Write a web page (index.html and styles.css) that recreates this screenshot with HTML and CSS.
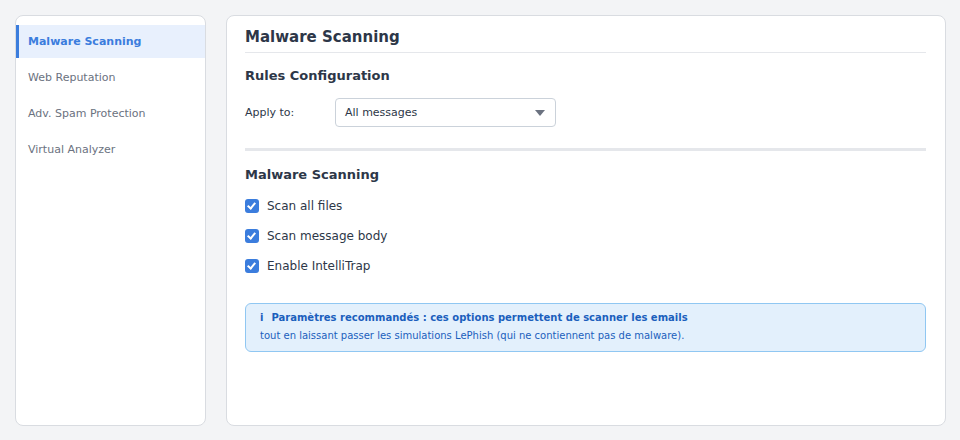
FILE: index.html
```html
<!DOCTYPE html>
<html lang="en">
<head>
  <meta charset="UTF-8">
  <title>Malware Scanning</title>
  <link rel="stylesheet" href="styles.css">
</head>
<body>
  <div class="layout">
    <nav class="sidebar">
      <a class="nav-item active">Malware Scanning</a>
      <a class="nav-item">Web Reputation</a>
      <a class="nav-item">Adv. Spam Protection</a>
      <a class="nav-item">Virtual Analyzer</a>
    </nav>

    <main class="panel">
      <h1 class="panel-title">Malware Scanning</h1>

      <h2 class="section-title">Rules Configuration</h2>
      <div class="form-row">
        <label class="form-label">Apply to:</label>
        <div class="select">
          <span>All messages</span>
          <span class="select-arrow"></span>
        </div>
      </div>

      <hr class="divider">

      <h2 class="section-title">Malware Scanning</h2>
      <div class="check-list">
        <label class="check-row"><span class="checkbox"></span>Scan all files</label>
        <label class="check-row"><span class="checkbox"></span>Scan message body</label>
        <label class="check-row"><span class="checkbox"></span>Enable IntelliTrap</label>
      </div>

      <div class="info-box">
        <div class="info-head"><span class="info-icon">i</span>Paramètres recommandés : ces options permettent de scanner les emails</div>
        <div class="info-text">tout en laissant passer les simulations LePhish (qui ne contiennent pas de malware).</div>
      </div>
    </main>
  </div>
</body>
</html>
```

FILE: styles.css
```css
html, body {
  height: 100%;
  margin: 0;
}

body {
  background-color: #f3f4f6;
  font-family: "DejaVu Sans", sans-serif;
  color: #2d3748;
  box-sizing: border-box;
  padding: 15px 14px 14px 15px;
}

.layout {
  display: flex;
  gap: 20px;
  height: 100%;
}

.sidebar {
  width: 191px;
  flex-shrink: 0;
  box-sizing: border-box;
  background: #fff;
  border: 1px solid #d9dce1;
  border-radius: 8px;
  padding-top: 9px;
  display: flex;
  flex-direction: column;
  gap: 3px;
}

.nav-item {
  display: block;
  padding: 10px 9px;
  font-size: 11px;
  line-height: 13px;
  color: #6b7280;
  border-left: 3px solid transparent;
}

.nav-item.active {
  background-color: #e8f0fd;
  border-left-color: #3b7ddd;
  color: #3b7ddd;
  font-weight: bold;
}

.panel {
  flex: 1;
  box-sizing: border-box;
  background: #fff;
  border: 1px solid #d9dce1;
  border-radius: 8px;
  padding: 12px 19px 0 18px;
}

.panel-title {
  margin: 0;
  font-size: 15px;
  line-height: 18px;
  padding-bottom: 6px;
  border-bottom: 1px solid #e5e7eb;
}

.section-title {
  margin: 15px 0 0;
  font-size: 13px;
  line-height: 16px;
}

.form-row {
  display: flex;
  align-items: center;
  margin-top: 14px;
}

.form-label {
  width: 90px;
  font-size: 11px;
}

.select {
  width: 221px;
  height: 29px;
  box-sizing: border-box;
  border: 1px solid #cbd2da;
  border-radius: 4px;
  padding: 0 9px;
  display: flex;
  align-items: center;
  justify-content: space-between;
  font-size: 11px;
}

.select-arrow {
  width: 0;
  height: 0;
  border-left: 5px solid transparent;
  border-right: 5px solid transparent;
  border-top: 6px solid #6b7280;
  margin-right: 1px;
}

.divider {
  margin: 21px 0 0;
  border: none;
  height: 3px;
  background: #e5e7eb;
}

.section-title + .check-list {
  margin-top: 8px;
}

.divider + .section-title {
  margin-top: 16px;
}

.check-row {
  display: flex;
  align-items: center;
  height: 30px;
  font-size: 12px;
}

.checkbox {
  width: 14px;
  height: 14px;
  border-radius: 3px;
  background: #3b7ddd;
  margin-right: 8px;
  position: relative;
}

.checkbox::after {
  content: "";
  position: absolute;
  left: 4px;
  top: 2px;
  width: 3px;
  height: 6px;
  border: solid #fff;
  border-width: 0 2px 2px 0;
  transform: rotate(40deg);
}

.info-box {
  margin-top: 22px;
  background: #e3f0fc;
  border: 1px solid #90c7f2;
  border-radius: 6px;
  padding: 7px 14px 8px;
  color: #1b5fbd;
}

.info-head {
  font-size: 10px;
  font-weight: bold;
  line-height: 14px;
}

.info-icon {
  margin-right: 8px;
}

.info-text {
  font-size: 10px;
  line-height: 14px;
  margin-top: 4px;
}
```
